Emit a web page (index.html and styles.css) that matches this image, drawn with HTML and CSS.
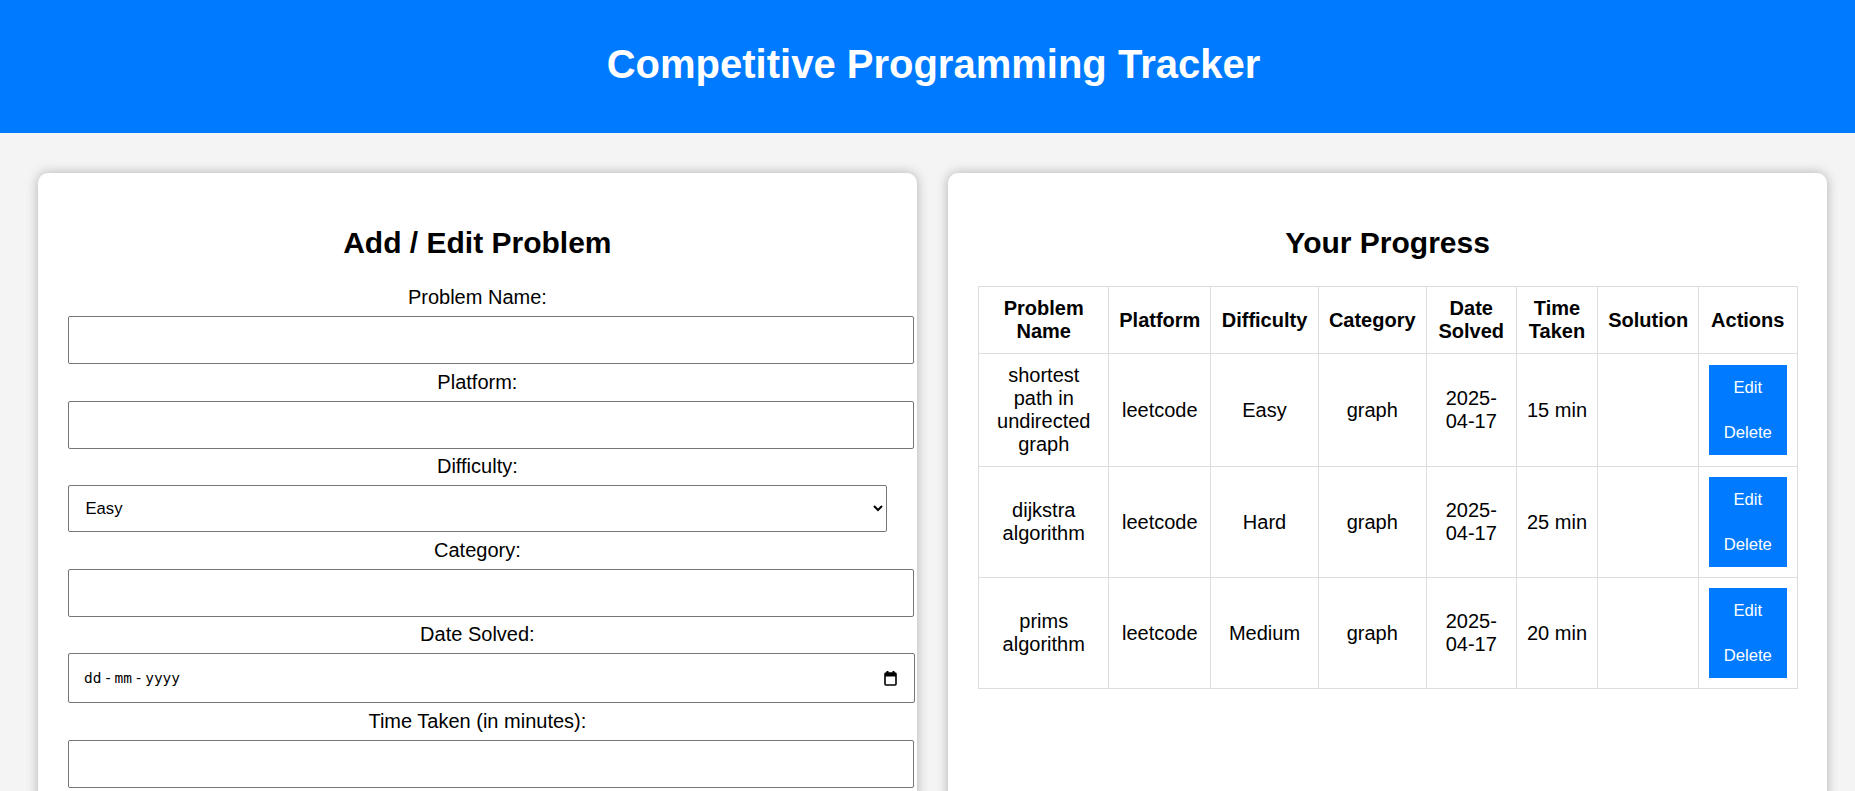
FILE: index.html
```html
<!DOCTYPE html>
<html lang="en">
<head>
<meta charset="utf-8">
<title>Competitive Programming Tracker</title>
<link rel="stylesheet" href="styles.css">
</head>
<body>
<header class="site-header">
  <h1 class="site-title">Competitive Programming Tracker</h1>
</header>
<main class="layout">
  <section class="card">
    <h2 class="card-title">Add / Edit Problem</h2>
    <form class="problem-form">
      <label class="field-label" for="pname">Problem Name:</label>
      <input class="field-input" id="pname" type="text">
      <label class="field-label" for="platform">Platform:</label>
      <input class="field-input" id="platform" type="text">
      <label class="field-label" for="difficulty">Difficulty:</label>
      <select class="field-select" id="difficulty">
        <option>Easy</option>
        <option>Medium</option>
        <option>Hard</option>
      </select>
      <label class="field-label" for="category">Category:</label>
      <input class="field-input" id="category" type="text">
      <label class="field-label">Date Solved:</label>
      <div class="field-input date-field">
        <span class="date-text">dd<span class="date-sep">-</span>mm<span class="date-sep">-</span>yyyy</span>
        <svg class="date-icon" width="13" height="15" viewBox="0 0 13 15" aria-hidden="true">
          <rect x="2.5" y="0" width="2" height="3" fill="#000"/>
          <rect x="8.5" y="0" width="2" height="3" fill="#000"/>
          <rect x="1" y="2" width="11" height="12" rx="1" fill="none" stroke="#000" stroke-width="1.6"/>
          <rect x="1" y="2" width="11" height="3.5" fill="#000"/>
        </svg>
      </div>
      <label class="field-label" for="time">Time Taken (in minutes):</label>
      <input class="field-input" id="time" type="text">
    </form>
  </section>
  <section class="card">
    <h2 class="card-title">Your Progress</h2>
    <table class="progress-table">
      <colgroup>
        <col class="col-name">
        <col class="col-platform">
        <col class="col-difficulty">
        <col class="col-category">
        <col class="col-date">
        <col class="col-time">
        <col class="col-solution">
        <col class="col-actions">
      </colgroup>
      <thead>
        <tr>
          <th>Problem Name</th>
          <th>Platform</th>
          <th>Difficulty</th>
          <th>Category</th>
          <th>Date Solved</th>
          <th>Time Taken</th>
          <th>Solution</th>
          <th>Actions</th>
        </tr>
      </thead>
      <tbody>
        <tr>
          <td>shortest path in undirected graph</td>
          <td>leetcode</td>
          <td>Easy</td>
          <td>graph</td>
          <td>2025-04-17</td>
          <td class="cell-nowrap">15 min</td>
          <td></td>
          <td><button class="btn-action" type="button">Edit</button><button class="btn-action" type="button">Delete</button></td>
        </tr>
        <tr>
          <td>dijkstra algorithm</td>
          <td>leetcode</td>
          <td>Hard</td>
          <td>graph</td>
          <td>2025-04-17</td>
          <td class="cell-nowrap">25 min</td>
          <td></td>
          <td><button class="btn-action" type="button">Edit</button><button class="btn-action" type="button">Delete</button></td>
        </tr>
        <tr>
          <td>prims algorithm</td>
          <td>leetcode</td>
          <td>Medium</td>
          <td>graph</td>
          <td>2025-04-17</td>
          <td class="cell-nowrap">20 min</td>
          <td></td>
          <td><button class="btn-action" type="button">Edit</button><button class="btn-action" type="button">Delete</button></td>
        </tr>
      </tbody>
    </table>
  </section>
</main>
</body>
</html>
```
FILE: styles.css
```css
html {
  scrollbar-width: none;
}
html::-webkit-scrollbar {
  display: none;
}
body {
  margin: 0;
  background: #f4f4f4;
  font-family: "Liberation Sans", Arial, sans-serif;
  font-size: 20px;
  color: #000;
}
.site-header {
  background: #007bff;
  padding: 40.5px 0 46.5px 12px;
  text-align: center;
}
.site-title {
  margin: 0;
  color: #fff;
  font-size: 40px;
  line-height: 46px;
  font-weight: bold;
}
.layout {
  display: flex;
  align-items: stretch;
  gap: 31.5px;
  padding: 40px 28px 40px 38px;
}
.card {
  flex: 1 1 0;
  min-width: 0;
  background: #fff;
  border-radius: 10px;
  padding: 30px;
  box-shadow: 0 0 12px rgba(0, 0, 0, 0.28);
  text-align: center;
}
.card-title {
  margin: 23.4px 0 25.4px;
  font-size: 30px;
  line-height: 34.5px;
  font-weight: bold;
}
.field-label {
  display: block;
  line-height: 23px;
}
.field-input {
  display: block;
  box-sizing: content-box;
  width: 100%;
  height: 21px;
  padding: 12.5px;
  margin: 7px 0 6.5px;
  border: 1px solid #767676;
  border-radius: 2px;
  background: #fff;
  font-family: "Liberation Sans", Arial, sans-serif;
  font-size: 16.67px;
  color: #000;
}
.field-select {
  display: block;
  box-sizing: border-box;
  width: 100%;
  height: 47px;
  padding: 0 10px 0 12.5px;
  margin: 7px 0 6.5px;
  border: 1px solid #767676;
  border-radius: 2px;
  background: #fff;
  font-family: "Liberation Sans", Arial, sans-serif;
  font-size: 16.67px;
  color: #000;
}
.date-field {
  display: flex;
  align-items: center;
  justify-content: space-between;
  height: 23px;
  padding: 12.5px 11px 12.5px 15px;
  text-align: left;
}
.date-text {
  font-family: "DejaVu Sans Mono", "Liberation Mono", monospace;
  font-size: 14.5px;
}
.date-sep {
  margin: 0 2.2px;
}
.date-icon {
  margin-right: 6px;
}
.progress-table {
  width: 100%;
  table-layout: fixed;
  border-collapse: collapse;
}
.col-name { width: 130px; }
.col-platform { width: 102px; }
.col-difficulty { width: 107.5px; }
.col-category { width: 108px; }
.col-date { width: 90px; }
.col-time { width: 81.5px; }
.col-solution { width: 100.5px; }
.col-actions { width: 99px; }
.progress-table th,
.progress-table td {
  border: 1px solid #ddd;
  padding: 10px;
  text-align: center;
  vertical-align: middle;
  line-height: 23px;
}
.progress-table th {
  font-weight: bold;
}
.progress-table .cell-nowrap {
  white-space: nowrap;
}
.btn-action {
  display: block;
  width: 100%;
  padding: 12.5px;
  border: none;
  border-radius: 0;
  background: #007bff;
  color: #fff;
  font-family: "Liberation Sans", Arial, sans-serif;
  font-size: 16.67px;
  line-height: 20px;
}
```
